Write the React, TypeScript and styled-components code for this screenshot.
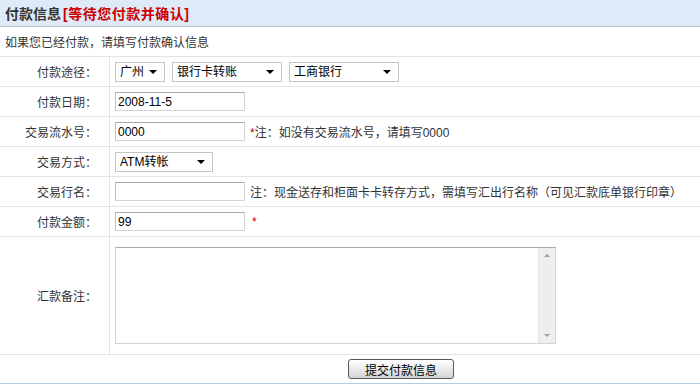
import React from 'react';
import styled, { createGlobalStyle } from 'styled-components';

const GlobalStyle = createGlobalStyle`
	body {
		margin: 0;
		background: #ffffff;
		font-family: 'Liberation Sans', 'Noto Sans CJK SC', sans-serif;
		font-size: 12px;
		color: #333333;
	}
`;

const Panel = styled.div`
	width: 700px;
	border-bottom: 1px solid #b9cce2;
`;

const Header = styled.div`
	height: 26px;
	display: flex;
	align-items: center;
	padding-left: 5px;
	background: #deeaf7;
	border-bottom: 1px solid #b6c4d2;
	font-size: 14px;
	font-weight: bold;
	color: #333333;
`;

const Status = styled.span`
	color: #cc0000;
	margin-left: 2px;
	letter-spacing: 0.5px;
`;

const Intro = styled.div`
	height: 29px;
	display: flex;
	align-items: center;
	padding-left: 5px;
	border-bottom: 1px solid #e3e3e3;
`;

const Row = styled.div<{ $tall?: boolean }>`
	display: grid;
	grid-template-columns: 110px 1fr;
	min-height: ${(p) => (p.$tall ? '117px' : '29px')};
	border-bottom: 1px solid #e3e3e3;
`;

const Label = styled.div`
	display: flex;
	align-items: center;
	justify-content: flex-end;
	padding-right: 12px;
	border-right: 1px solid #e3e3e3;
`;

const Field = styled.div`
	display: flex;
	align-items: center;
	gap: 7px;
	padding-left: 5px;
`;

const TextInput = styled.input`
	box-sizing: border-box;
	width: 130px;
	height: 19px;
	padding: 0 2px;
	border: 1px solid #d4d4d4;
	border-top-color: #a8a8a8;
	border-left-color: #c0c0c0;
	font-family: 'Liberation Sans', 'Noto Sans CJK SC', sans-serif;
	font-size: 12px;
	color: #000000;
	outline: none;
`;

const SelectWrap = styled.div<{ $w: number }>`
	position: relative;
	width: ${(p) => p.$w}px;
	height: 20px;

	&::after {
		content: '';
		position: absolute;
		right: 8px;
		top: 8px;
		border-left: 4px solid transparent;
		border-right: 4px solid transparent;
		border-top: 4px solid #000000;
		pointer-events: none;
	}
`;

const Select = styled.select`
	appearance: none;
	box-sizing: border-box;
	width: 100%;
	height: 100%;
	padding: 0 4px;
	border: 1px solid #c4c4c4;
	border-radius: 0;
	background: #ffffff;
	font-family: 'Liberation Sans', 'Noto Sans CJK SC', sans-serif;
	font-size: 12px;
	color: #000000;
	outline: none;
`;

const Note = styled.span`
	margin-left: -2px;
	color: #333333;
`;

const Star = styled.span`
	color: #cc0000;
`;

const RemarkBox = styled.div`
	box-sizing: border-box;
	display: flex;
	width: 441px;
	height: 97px;
	border: 1px solid #d4d4d4;
	border-top-color: #a8a8a8;
`;

const Remark = styled.textarea`
	flex: 1;
	margin: 0;
	padding: 2px;
	border: none;
	resize: none;
	overflow: hidden;
	outline: none;
`;

const ScrollTrack = styled.div`
	width: 16px;
	display: flex;
	flex-direction: column;
	justify-content: space-between;
	align-items: center;
	padding: 6px 0;
	background: #eeeeee;
	border-left: 1px solid #e2e2e2;
`;

const ScrollArrow = styled.span<{ $down?: boolean }>`
	width: 0;
	height: 0;
	border-left: 3px solid transparent;
	border-right: 3px solid transparent;
	${(p) => (p.$down ? 'border-top: 3px solid #a0a0a0;' : 'border-bottom: 3px solid #a0a0a0;')}
`;

const Actions = styled.div`
	height: 28px;
	display: flex;
	align-items: center;
	justify-content: center;
	padding-left: 102px;
`;

const SubmitButton = styled.button`
	width: 106px;
	height: 20px;
	padding: 0;
	border: 1px solid #5a5a5a;
	border-radius: 3px;
	background: linear-gradient(#ffffff, #e6e6e6 60%, #d2d2d2);
	font-family: 'Liberation Sans', 'Noto Sans CJK SC', sans-serif;
	font-size: 12px;
	color: #000000;
`;

const App = () => {
	return (
		<>
			<GlobalStyle />
			<Panel>
				<Header>
					付款信息<Status>[等待您付款并确认]</Status>
				</Header>
				<Intro>如果您已经付款，请填写付款确认信息</Intro>

				<Row>
					<Label>付款途径：</Label>
					<Field>
						<SelectWrap $w={50}>
							<Select defaultValue='gz'>
								<option value='gz'>广州</option>
							</Select>
						</SelectWrap>
						<SelectWrap $w={110}>
							<Select defaultValue='card'>
								<option value='card'>银行卡转账</option>
							</Select>
						</SelectWrap>
						<SelectWrap $w={110}>
							<Select defaultValue='icbc'>
								<option value='icbc'>工商银行</option>
							</Select>
						</SelectWrap>
					</Field>
				</Row>

				<Row>
					<Label>付款日期：</Label>
					<Field>
						<TextInput defaultValue='2008-11-5' />
					</Field>
				</Row>

				<Row>
					<Label>交易流水号：</Label>
					<Field>
						<TextInput defaultValue='0000' />
						<Note>
							<Star>*</Star>注：如没有交易流水号，请填写0000
						</Note>
					</Field>
				</Row>

				<Row>
					<Label>交易方式：</Label>
					<Field>
						<SelectWrap $w={98}>
							<Select defaultValue='atm'>
								<option value='atm'>ATM转帐</option>
							</Select>
						</SelectWrap>
					</Field>
				</Row>

				<Row>
					<Label>交易行名：</Label>
					<Field>
						<TextInput defaultValue='' />
						<Note>注：现金送存和柜面卡卡转存方式，需填写汇出行名称（可见汇款底单银行印章）</Note>
					</Field>
				</Row>

				<Row>
					<Label>付款金额：</Label>
					<Field>
						<TextInput defaultValue='99' />
						<Star>*</Star>
					</Field>
				</Row>

				<Row $tall>
					<Label>汇款备注：</Label>
					<Field>
						<RemarkBox>
							<Remark />
							<ScrollTrack>
								<ScrollArrow />
								<ScrollArrow $down />
							</ScrollTrack>
						</RemarkBox>
					</Field>
				</Row>

				<Actions>
					<SubmitButton type='button'>提交付款信息</SubmitButton>
				</Actions>
			</Panel>
		</>
	);
};

export default App;
